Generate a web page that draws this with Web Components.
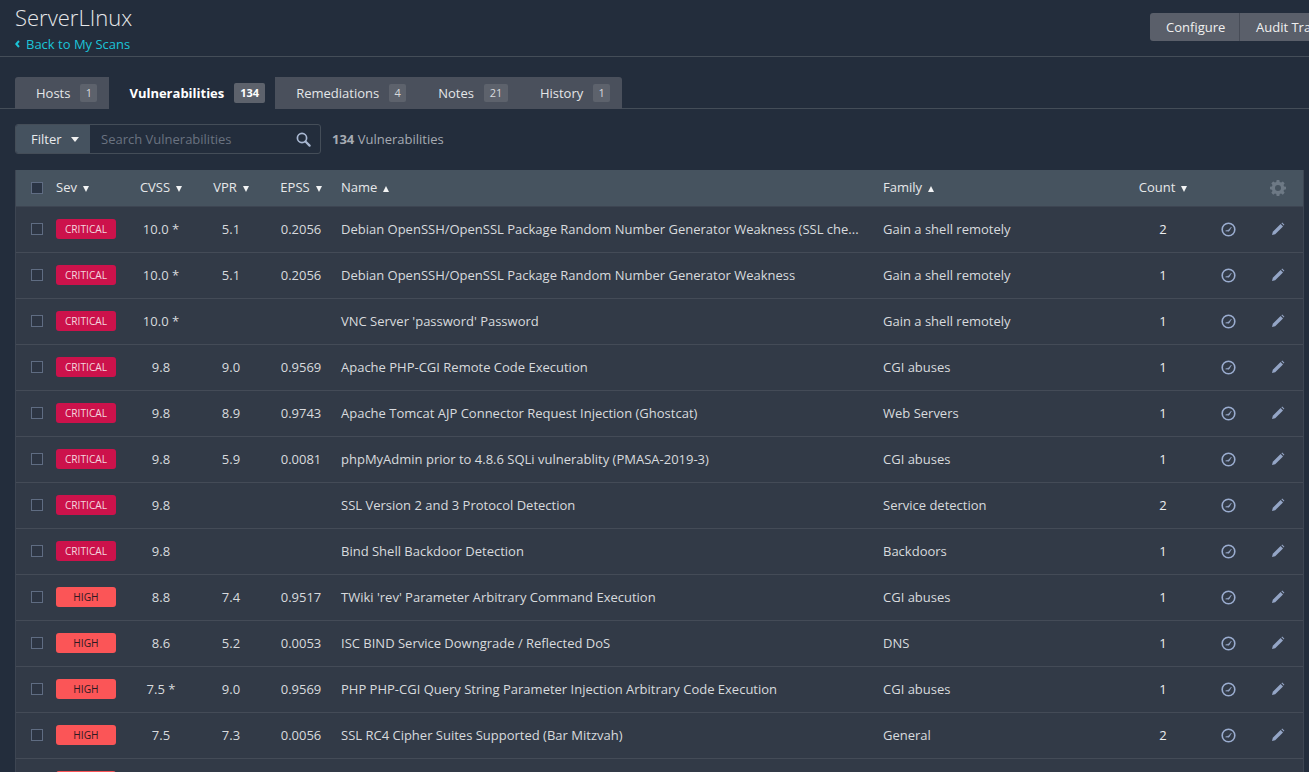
<!DOCTYPE html>
<html>
<head>
<meta charset="utf-8">
<title>ServerLInux</title>
<style>
  html, body { margin: 0; height: 772px; overflow: hidden; background: #232d3c; font-family: "Open Sans", "Noto Sans", sans-serif; }
</style>
</head>
<body>
<scan-header></scan-header>
<scan-tabs></scan-tabs>
<scan-toolbar></scan-toolbar>
<vuln-table></vuln-table>

<script>
class ScanHeader extends HTMLElement {
    connectedCallback() {
        this.attachShadow({ mode: 'open' });
        this.shadowRoot.innerHTML = `
  <style>
    :host { display: flex; justify-content: space-between; height: 56px; border-bottom: 1px solid #444d58; overflow: hidden; }
    .left { padding: 2px 0 0 15px; }
    h1 { margin: 0; font-size: 22px; font-weight: 300; line-height: 30px; color: #e6e8ea; }
    a { display: flex; align-items: center; gap: 6px; margin-top: 3px; font-size: 13px; line-height: 18px; color: #1bc4d8; }
    .btns { display: flex; flex: none; margin: 13px -31px 0 0; height: 28px; }
    .btn { flex: none; box-sizing: border-box; font-size: 13px; line-height: 28px; color: #f0f0f0; background: #5a5f6a; padding-left: 16px; white-space: nowrap; overflow: hidden; }
    .btn:first-child { width: 90px; border-radius: 3px 0 0 3px; border-right: 1px solid #474c57; }
    .btn:last-child { width: 100px; }
  </style>
  <div class="left">
    <h1>ServerLInux</h1>
    <a><svg width="5" height="8" viewBox="0 0 5 8"><path d="M4 1 1.300 4 4 7" fill="none" stroke="#1bc4d8" stroke-width="2"/></svg>Back to My Scans</a>
  </div>
  <div class="btns"><div class="btn">Configure</div><div class="btn">Audit Trail</div></div>`;
    }
}

class ScanTabs extends HTMLElement {
    connectedCallback() {
        this.attachShadow({ mode: 'open' });
        const tabs = [['Hosts', '1'], ['Vulnerabilities', '134', true], ['Remediations', '4'], ['Notes', '21'], ['History', '1']];
        this.shadowRoot.innerHTML = `
  <style>
    :host { display: block; margin-top: 20px; padding-left: 15px; height: 31px; border-bottom: 1px solid #444d58; }
    .tabs { display: inline-flex; height: 32px; background: #4a505c; border-radius: 3px 3px 0 0; font-size: 13px; color: #e4e6e8; }
    .tab { display: flex; align-items: center; gap: 10px; height: 31px; padding: 0 11px 0 21px; }
    .tab:first-child, .tab:last-child { padding-right: 12px; }
    .tab.on { background: #232d3c; height: 32px; font-weight: 700; color: #fff; padding: 0 10px 0 20px; }
    .n { min-width: 13px; padding: 0 2px; height: 18px; line-height: 18px; border-radius: 2px; background: #5d626c; font-size: 11px; text-align: center; color: #d8dade; }
    .n.w { padding: 0 5.500px; }
    .tab.on .n { padding: 0 6px; height: 20px; line-height: 19px; color: #fff; }
  </style>
  <div class="tabs">${tabs.map(t => `<div class="tab${t[2] ? ' on' : ''}">${t[0]}<span class="n${t[1].length > 1 ? ' w' : ''}">${t[1]}</span></div>`).join('')}</div>`;
    }
}

class ScanToolbar extends HTMLElement {
    connectedCallback() {
        this.attachShadow({ mode: 'open' });
        this.shadowRoot.innerHTML = `
  <style>
    :host { display: flex; align-items: center; margin: 15px 0 0 15px; height: 30px; font-size: 13px; }
    .box { display: flex; width: 306px; height: 30px; box-sizing: border-box; border: 1px solid #444d58; border-radius: 3px; overflow: hidden; }
    .filter { display: flex; align-items: center; gap: 9px; width: 74px; box-sizing: border-box; padding-left: 15px; background: #45525f; color: #e8eaec; }
    .filter i { width: 0; height: 0; border: 4.500px solid transparent; border-top: 5px solid #f0f0f0; border-bottom: 0; }
    .search { flex: 1; display: flex; align-items: center; justify-content: space-between; padding: 0 9px 0 11px; color: #6a7280; }
    .count { margin-left: 11px; color: #a6abb3; }
    b { font-weight: 700; }
  </style>
  <div class="box">
    <div class="filter">Filter<i></i></div>
    <div class="search">Search Vulnerabilities
      <svg width="15" height="15" viewBox="0 0 15 15"><circle cx="6" cy="6" r="4.600" fill="none" stroke="#a9b8d2" stroke-width="1.700"/><path d="M9.500 9.500 13.600 13.600" stroke="#a9b8d2" stroke-width="2.200" stroke-linecap="round"/></svg>
    </div>
  </div>
  <div class="count"><b>134</b> Vulnerabilities</div>`;
    }
}

class VulnBadge extends HTMLElement {
    connectedCallback() {
        this.attachShadow({ mode: 'open' });
        const level = this.getAttribute('level');
        this.shadowRoot.innerHTML = `
  <style>
    :host { display: block; width: 60px; height: 20px; line-height: 20px; border-radius: 3px; text-align: center; font-size: 10.200px; }
    :host([level=CRITICAL]) { background: #cc124b; color: #f3d5de; }
    :host([level=HIGH]) { background: #fb5557; color: #2f1a22; }
  </style>
  ${level}`;
    }
}

const COLS = 'grid-template-columns: 40px 75px 60px 80px 60px 542px 250px 80px 50px 50px;';
const CHECK = `display: block; width: 10px; height: 10px; box-sizing: content-box; border: 1px solid #5f6c82; margin-left: 15px;`;

class VulnRow extends HTMLElement {
    connectedCallback() {
        this.attachShadow({ mode: 'open' });
        const a = n => this.getAttribute(n) || '';
        this.shadowRoot.innerHTML = `
  <style>
    :host { display: grid; ${COLS} align-items: center; height: 44px; padding-bottom: 1px; border-bottom: 1px solid #444b57; font-size: 13px; color: #d8dade; }
    .c { ${CHECK} background: #2d3543; }
    .m { text-align: center; }
    .t { padding-left: 10px; white-space: nowrap; }
    .ct { text-align: center; color: #eceef0; }
    svg { display: block; margin: 0 auto; }
  </style>
  <span class="c"></span>
  <vuln-badge level="${a('sev')}"></vuln-badge>
  <span class="m">${a('cvss')}</span>
  <span class="m">${a('vpr')}</span>
  <span class="m">${a('epss')}</span>
  <span class="t">${a('name')}</span>
  <span class="t">${a('family')}</span>
  <span class="ct">${a('count')}</span>
  <svg width="15" height="15" viewBox="0 0 15 15"><circle cx="7.500" cy="7.500" r="6.300" fill="none" stroke="#9aaccf" stroke-width="1.600"/><path d="M4.600 8.900 7.300 8.200 10.400 5.100 8 9.200Z" fill="#9aaccf" stroke="#9aaccf" stroke-width=".5"/></svg>
  <svg width="14" height="14" viewBox="0 0 14 14"><path d="M1 13 1.800 9.800 9.600 2 12 4.400 4.200 12.200Z" fill="#94a5c6"/><path d="M10.400 1.200 11.200.6 13.400 2.800 12.800 3.600Z" fill="#94a5c6"/></svg>`;
    }
}

class VulnTable extends HTMLElement {
    connectedCallback() {
        this.attachShadow({ mode: 'open' });
        const rows = [
            ['CRITICAL', '10.0 *', '5.1', '0.2056', 'Debian OpenSSH/OpenSSL Package Random Number Generator Weakness (SSL che...', 'Gain a shell remotely', '2'],
            ['CRITICAL', '10.0 *', '5.1', '0.2056', 'Debian OpenSSH/OpenSSL Package Random Number Generator Weakness', 'Gain a shell remotely', '1'],
            ['CRITICAL', '10.0 *', '', '', "VNC Server 'password' Password", 'Gain a shell remotely', '1'],
            ['CRITICAL', '9.8', '9.0', '0.9569', 'Apache PHP-CGI Remote Code Execution', 'CGI abuses', '1'],
            ['CRITICAL', '9.8', '8.9', '0.9743', 'Apache Tomcat AJP Connector Request Injection (Ghostcat)', 'Web Servers', '1'],
            ['CRITICAL', '9.8', '5.9', '0.0081', 'phpMyAdmin prior to 4.8.6 SQLi vulnerablity (PMASA-2019-3)', 'CGI abuses', '1'],
            ['CRITICAL', '9.8', '', '', 'SSL Version 2 and 3 Protocol Detection', 'Service detection', '2'],
            ['CRITICAL', '9.8', '', '', 'Bind Shell Backdoor Detection', 'Backdoors', '1'],
            ['HIGH', '8.8', '7.4', '0.9517', "TWiki 'rev' Parameter Arbitrary Command Execution", 'CGI abuses', '1'],
            ['HIGH', '8.6', '5.2', '0.0053', 'ISC BIND Service Downgrade / Reflected DoS', 'DNS', '1'],
            ['HIGH', '7.5 *', '9.0', '0.9569', 'PHP PHP-CGI Query String Parameter Injection Arbitrary Code Execution', 'CGI abuses', '1'],
            ['HIGH', '7.5', '7.3', '0.0056', 'SSL RC4 Cipher Suites Supported (Bar Mitzvah)', 'General', '2'],
            ['HIGH', '', '', '', '', '', '']
        ];
        const arrow = d => `<i class="${d}"></i>`;
        this.shadowRoot.innerHTML = `
  <style>
    :host { display: block; margin: 16px 5px 0 15px; border: 1px solid #3d4552; border-width: 0 1px; background: #323a47; height: 640px; overflow: hidden; }
    .head { display: grid; ${COLS} align-items: center; height: 35px; padding-bottom: 1px; border-bottom: 1px solid #3d4552; background: #46535f; font-size: 13px; color: #e6e8ea; }
    .c { ${CHECK} background: #2a3444; }
    .m { display: flex; justify-content: center; align-items: center; gap: 5px; padding-bottom: 2px; }
    .l { display: flex; align-items: center; gap: 5px; white-space: nowrap; padding-bottom: 2px; }
    .t { padding-left: 10px; }
    i { width: 0; height: 0; border: 3.500px solid transparent; margin: 4px 0 0 1px; }
    i.dn { border-top: 6px solid #f2f3f4; border-bottom: 0; }
    i.up { border-bottom: 6px solid #f2f3f4; border-top: 0; }
    svg { display: block; margin: 0 auto; }
  </style>
  <div class="head">
    <span class="c"></span>
    <span class="l">Sev${arrow('dn')}</span>
    <span class="m">CVSS${arrow('dn')}</span>
    <span class="m">VPR${arrow('dn')}</span>
    <span class="m">EPSS${arrow('dn')}</span>
    <span class="l t">Name${arrow('up')}</span>
    <span class="l t">Family${arrow('up')}</span>
    <span class="m">Count${arrow('dn')}</span>
    <span></span>
    <svg width="16" height="16" viewBox="0 0 24 24"><path fill="#6d7985" fill-rule="evenodd" d="M10 1h4l.6 3.100 2 .8L19.300 3.200 22 6l-1.700 2.600.8 2L24 11v4l-2.900.5-.8 2 1.700 2.700L19.200 23l-2.600-1.700-2 .8L14 25h-4l-.6-2.900-2-.8L4.800 23 2 20.200l1.700-2.700-.8-2L0 15v-4l2.900-.4.800-2L2 6l2.800-2.800 2.600 1.700 2-.8ZM12 8.500a4.500 4.500 0 1 0 0 9 4.500 4.500 0 0 0 0-9Z" transform="translate(0 -1)"/></svg>
  </div>
  ${rows.map(r => `<vuln-row sev="${r[0]}" cvss="${r[1]}" vpr="${r[2]}" epss="${r[3]}" name="${r[4]}" family="${r[5]}" count="${r[6]}"></vuln-row>`).join('')}`;
    }
}

customElements.define('scan-header', ScanHeader);
customElements.define('scan-tabs', ScanTabs);
customElements.define('scan-toolbar', ScanToolbar);
customElements.define('vuln-badge', VulnBadge);
customElements.define('vuln-row', VulnRow);
customElements.define('vuln-table', VulnTable);
</script>
</body>
</html>
